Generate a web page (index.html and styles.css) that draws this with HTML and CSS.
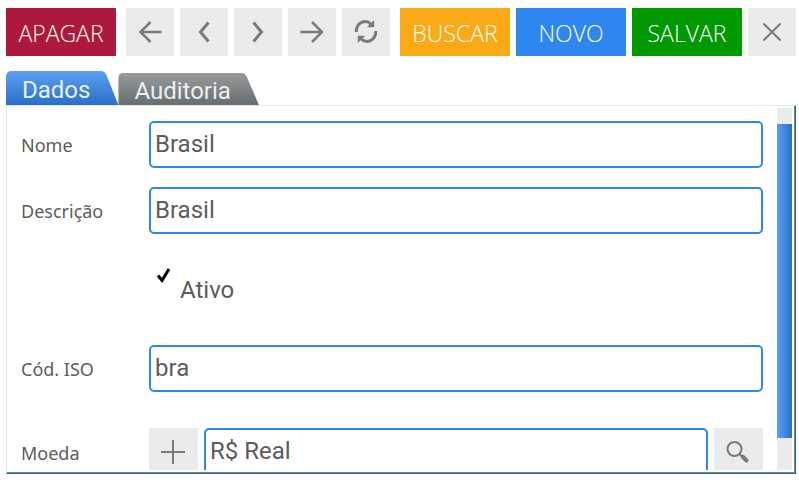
FILE: index.html
```html
<!DOCTYPE html>
<html lang="pt-BR">
<head>
<meta charset="utf-8">
<title>Cadastro de País</title>
<link rel="stylesheet" href="styles.css">
</head>
<body>
<header class="toolbar">
  <button class="btn btn-delete" type="button">APAGAR</button>
  <div class="group">
    <button class="icon-btn" type="button" aria-label="Primeiro"><svg viewBox="0 0 48 48"><path class="arrow" d="M35.500 24H15M24.500 14L14.500 24L24.500 34"/></svg></button>
    <button class="icon-btn" type="button" aria-label="Anterior"><svg viewBox="0 0 48 48"><path class="thick" d="M28.500 14.500L20.500 24L28.500 33.500"/></svg></button>
    <button class="icon-btn" type="button" aria-label="Próximo"><svg viewBox="0 0 48 48"><path class="thick" d="M19.500 14.500L27.500 24L19.500 33.500"/></svg></button>
    <button class="icon-btn" type="button" aria-label="Último"><svg viewBox="0 0 48 48"><path class="arrow" d="M12.500 24H33M24 14L34 24L24 34"/></svg></button>
    <button class="icon-btn" type="button" aria-label="Atualizar"><svg viewBox="0 0 48 48"><path class="arc" d="M14.200 24C14.200 14.500 23.500 10.500 29.500 16.500M33.800 23C33.800 32.500 24.500 36.500 18.500 30.500"/><path class="solid" d="M32.200 12V19.200H24.800Z M15.800 35V27.800H23.200Z"/></svg></button>
  </div>
  <div class="group">
    <button class="btn btn-search" type="button">BUSCAR</button>
    <button class="btn btn-new" type="button">NOVO</button>
    <button class="btn btn-save" type="button">SALVAR</button>
    <button class="icon-btn" type="button" aria-label="Fechar"><svg viewBox="0 0 48 48"><path class="medium" d="M15.500 15.500L32.500 32.500M32.500 15.500L15.500 32.500"/></svg></button>
  </div>
</header>
<nav class="tabs" role="tablist">
  <button class="tab tab-active" type="button" role="tab" aria-selected="true">Dados</button>
  <button class="tab" type="button" role="tab" aria-selected="false">Auditoria</button>
</nav>
<main class="panel">
  <form class="fields">
    <div class="row"><label for="nome">Nome</label><input class="text" id="nome" type="text" value="Brasil"></div>
    <div class="row"><label for="descricao">Descrição</label><input class="text" id="descricao" type="text" value="Brasil"></div>
    <div class="row row-check">
      <input class="check" id="ativo" type="checkbox" checked><svg class="tick" viewBox="0 0 16 16" aria-hidden="true"><path d="M2 7.500L6 12.500L13 1"/></svg><label class="check-label" for="ativo">Ativo</label>
    </div>
    <div class="row"><label for="iso">Cód. ISO</label><input class="text" id="iso" type="text" value="bra"></div>
    <div class="row row-currency">
      <label for="moeda">Moeda</label>
      <div class="lookup">
        <button class="icon-btn" type="button" aria-label="Adicionar moeda"><svg viewBox="0 0 48 48"><path class="medium" d="M24 12V36M12 24H36"/></svg></button>
        <input class="text" id="moeda" type="text" value="R$ Real">
        <button class="icon-btn" type="button" aria-label="Pesquisar moeda"><svg viewBox="0 0 48 48"><circle class="medium" cx="20.500" cy="21" r="7"/><path class="medium" d="M25.500 26L28 28.500"/><path class="handle" d="M28.500 28.500L32.500 32.500"/></svg></button>
      </div>
    </div>
  </form>
  <div class="scrollbar" aria-hidden="true"><div class="thumb"></div></div>
</main>
</body>
</html>
```
FILE: styles.css
```css
* {
  box-sizing: border-box;
}

body {
  display: flex;
  flex-direction: column;
  height: 100vh;
  margin: 0;
  padding: 8px 3px 6px 6px;
  overflow: hidden;
  background: #fff;
  color: #5c5c5c;
  font-family: Roboto, sans-serif;
  font-size: 24px;
}

button {
  border: 0;
  padding: 0;
  font: inherit;
}

.toolbar {
  display: flex;
  gap: 10px;
}

.group {
  display: flex;
  gap: 6px;
}

.btn {
  width: 110px;
  height: 48px;
  padding-top: 2px;
  color: #fff;
  font-family: "Open Sans", sans-serif;
  font-weight: 300;
  font-size: 23px;
}

.btn-delete { background: #ad193c; }
.btn-search { background: #fca918; }
.btn-new { background: #2e87ef; }
.btn-save { background: #009900; }

.icon-btn {
  flex: none;
  width: 48px;
  height: 48px;
  background: #eaeceb;
}

.icon-btn svg {
  display: block;
  width: 48px;
  height: 48px;
  fill: none;
  stroke: #7a7a7a;
}

.thick { stroke-width: 3; }
.arrow { stroke-width: 2.5; }
.medium { stroke-width: 2; }
.arc { stroke-width: 3; }
.handle { stroke-width: 4; stroke-linecap: round; }
.solid { fill: #7a7a7a; stroke: none; }

.tabs {
  display: flex;
  align-items: flex-end;
  height: 34px;
  margin-top: 15px;
}

.tab {
  height: 32px;
  padding: 3px 28px 0 16px;
  border-radius: 5px 0 0 0;
  background: linear-gradient(#989c9c, #666d70);
  color: #ecefef;
  line-height: 30px;
  clip-path: polygon(0 0, calc(100% - 17px) 0, calc(100% - 14px) 1px, calc(100% - 12px) 4px, 100% 100%, 0 100%);
}

.tab-active {
  height: 34px;
  background: linear-gradient(#5da0f0, #2870c6);
}

.panel {
  display: flex;
  flex: 1;
  min-height: 0;
  gap: 14px;
  padding: 2px 3px 3px 14px;
  border: 1px solid #e6e8e8;
  border-right-color: #1c6a94;
  border-bottom-color: #1c6a94;
  box-shadow: inset -1px -1px #808080;
}

.fields {
  display: flex;
  flex: 1;
  flex-direction: column;
  gap: 19px;
  min-width: 0;
  padding-top: 13px;
  overflow: hidden;
}

.row {
  display: grid;
  flex: none;
  grid-template-columns: 128px 1fr;
  align-items: center;
}

.row label {
  padding-top: 1px;
  font-family: "Noto Sans", sans-serif;
  font-size: 18px;
}

.text {
  width: 100%;
  min-width: 0;
  height: 47px;
  padding: 0 4px 2px;
  border: 2px solid #2e87ef;
  border-radius: 5px;
  background: #fff;
  color: #5c5c5c;
  font: 24px Roboto, sans-serif;
}

.row-check {
  display: flex;
  height: 73px;
  padding-left: 135px;
}

.check {
  position: absolute;
  width: 16px;
  height: 16px;
  margin: 0;
  opacity: 0;
}

.tick {
  align-self: flex-start;
  width: 16px;
  height: 16px;
  margin: 15px 8px 0 0;
  visibility: hidden;
  fill: none;
  stroke: #000;
  stroke-width: 3;
}

.check:checked + .tick {
  visibility: visible;
}

.row .check-label {
  padding-top: 1px;
  font: 24px Roboto, sans-serif;
}

.row-currency {
  margin-top: 17px;
}

.lookup {
  display: flex;
  gap: 6px;
}

.lookup .icon-btn {
  width: 49px;
}

.scrollbar {
  width: 15px;
  padding: 16px 0 32px;
  background: #eaeceb;
}

.thumb {
  height: 100%;
  background: linear-gradient(90deg, #5da0f0, #2870c6);
}
```
